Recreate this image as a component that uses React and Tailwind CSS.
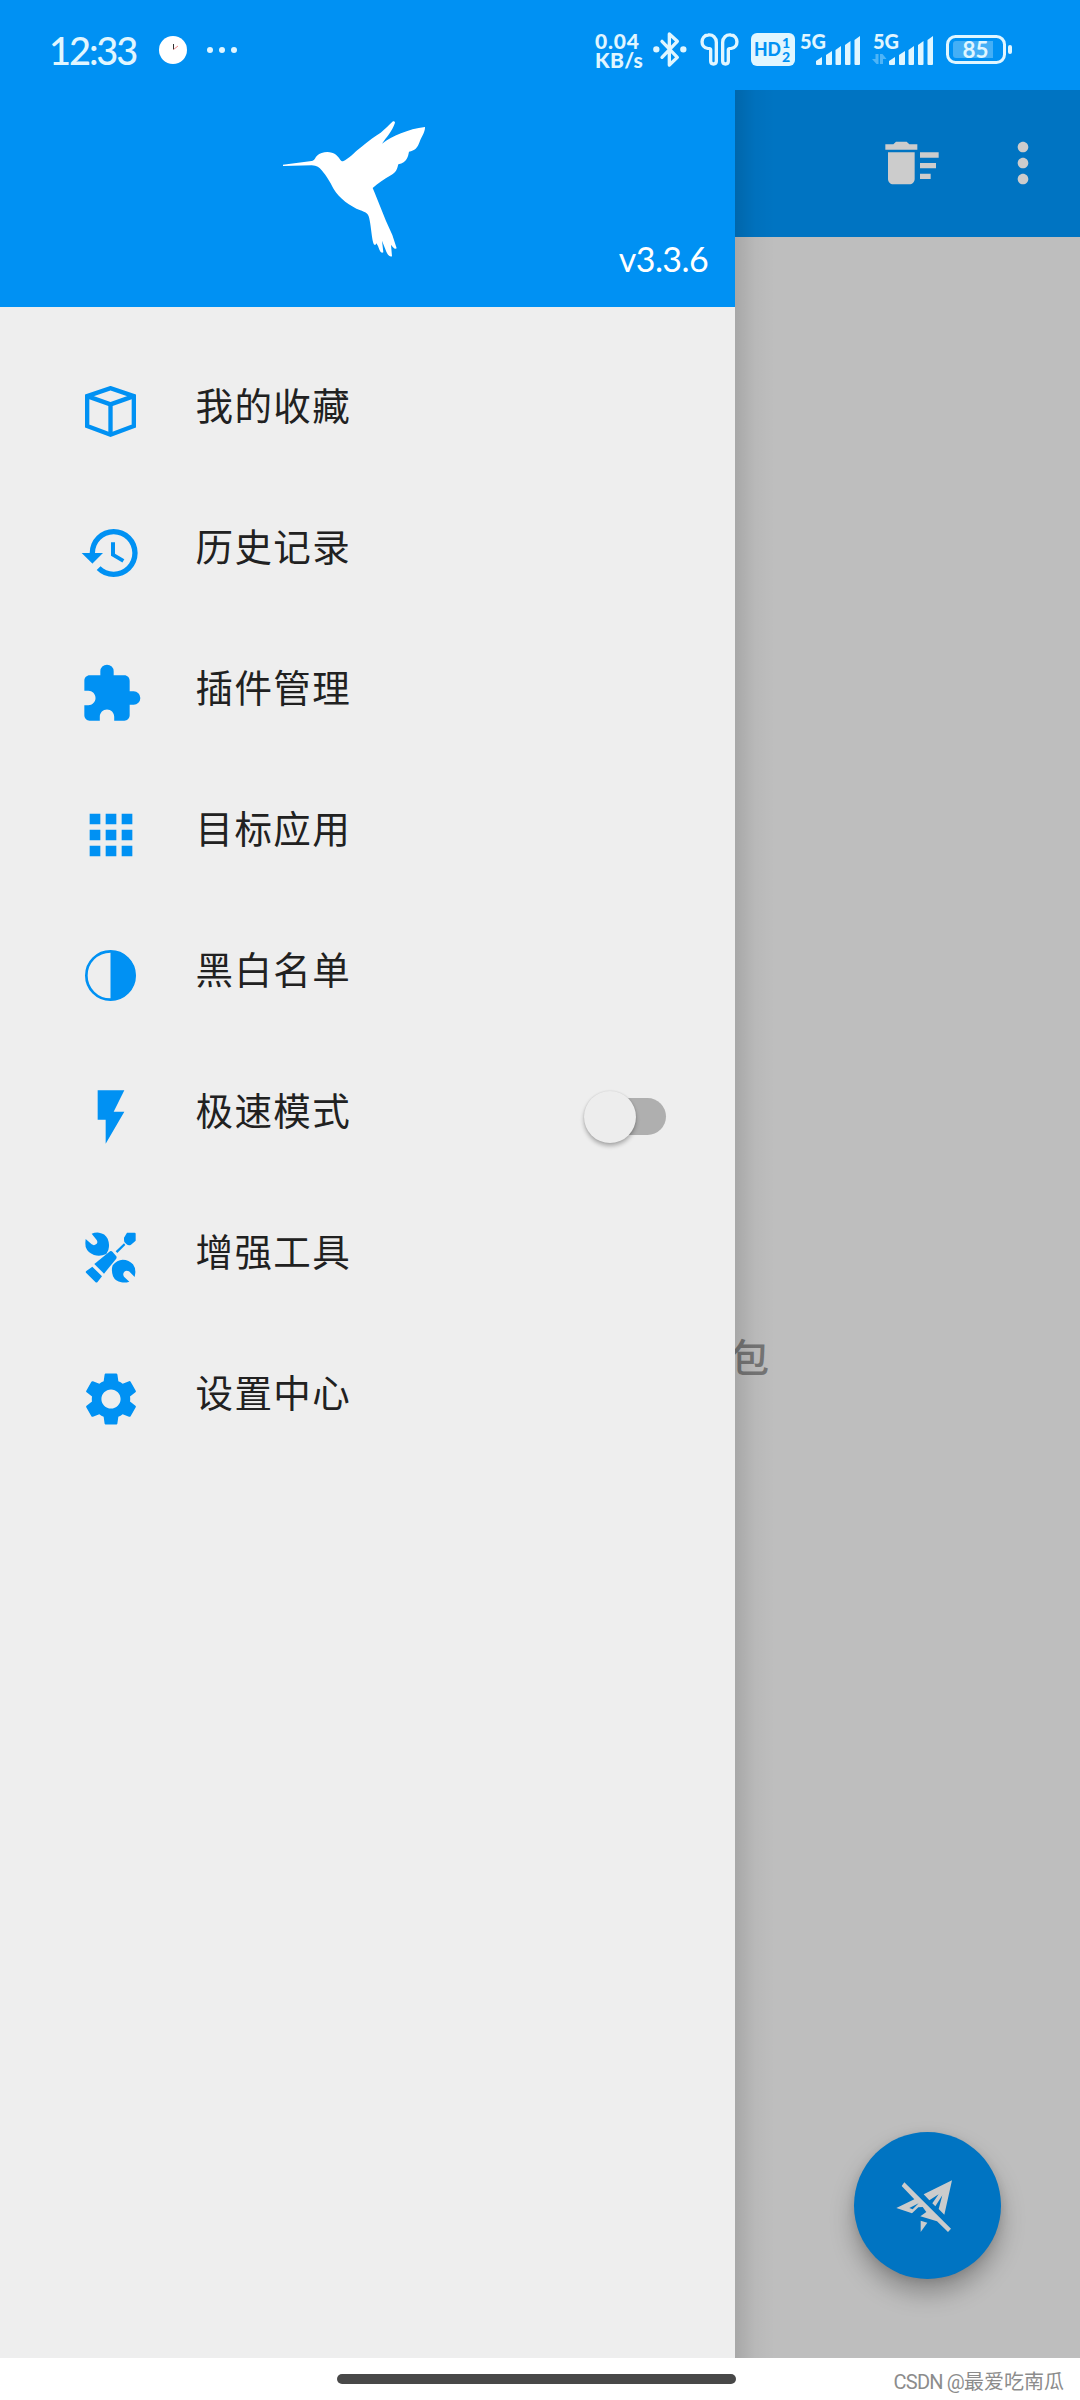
import React, { useState } from 'react';
import {
  MdHistory,
  MdExtension,
  MdApps,
  MdFlashOn,
  MdSettings,
  MdDeleteSweep,
  MdMoreVert,
} from 'react-icons/md';

const BoxIcon = () => (
  <svg className="w-[51px] h-[51px]" viewBox="0 0 153 153" fill="none" stroke="currentColor" strokeWidth="13">
    <path d="M6.500 30.500L76.500 6.500L146.500 30.500V120L76.500 146L6.500 120Z" />
    <path d="M6.500 30.500L76.500 55L146.500 30.500M76.500 55V146" />
  </svg>
);

const ContrastIcon = () => (
  <svg className="w-[51px] h-[51px]" viewBox="0 0 153 153">
    <circle cx="76.500" cy="76.500" r="72.500" fill="none" stroke="currentColor" strokeWidth="8" />
    <path d="M76.500 2a74.500 74.500 0 0 1 0 149z" fill="currentColor" />
  </svg>
);

const ToolsIcon = () => (
  <svg className="w-[51px] h-[51px]" viewBox="0 0 153 153" fill="currentColor">
    <path d="M20 5Q30 1 42 2Q60 4 68 20Q75 38 70 54L64 66Q45 75 27 69Q8 62 2 45Q0 33 2 21L20 37Q27 42 33 37Q40 32 35 24Z" />
    <path d="M133 149Q121 153 109 151Q91 148 84 133Q78 115 83 100Q96 84 113 83Q132 83 144 97Q152 108 151 122L149 135L132 118Q124 114 118 119Q112 126 117 134Z" />
    <path d="M126 2H149Q152 2 152 5V26L138 38Q131 42 124 36Q116 32 117 24V17Z" />
    <path d="M117 34L121 39L97 63L92 58Z" />
    <path d="M75 58Q79 56 83 60L94 73Q96 77 93 81L57 125L28 96Z" />
    <path d="M22 104L51 133L37 151Q34 153 31 150L3 122Q1 119 4 117Z" />
  </svg>
);

const HummingbirdLogo = () => (
  <svg className="w-[144px] h-[138px]" viewBox="66 60 432 414" fill="#fff">
    <path d="M69 194L155 183C164 181 165 173 171 167C185 154 212 152 228 164C239 173 240 183 249 184C266 177 282 158 303 142C326 122 346 108 362 98C376 88 387 74 399 64Q405 62 405 68C397 93 378 113 366 131C397 108 444 87 495 81C496 96 484 111 479 125C473 143 464 152 447 155C444 169 442 187 415 193C411 208 409 218 390 227C374 236 354 250 338 264L344 278L378 363L397 405L410 445C404 450 397 439 393 434L396 469C388 472 383 463 379 455L366 422L370 457C362 462 358 449 354 438L349 430L347 434C341 437 339 427 337 416C333 389 331 365 326 349C322 338 314 336 301 331C270 319 238 295 221 267C209 244 200 229 185 211C178 202 171 197 155 196L69 198Z" />
  </svg>
);

const BluetoothIcon = () => (
  <svg className="w-[34px] h-[37px]" viewBox="0 0 102 111" fill="none" stroke="currentColor" strokeWidth="10" strokeLinejoin="round" strokeLinecap="round">
    <path d="M27 31L73 79L49 102V9L73 31L27 79" />
    <circle cx="10" cy="55" r="4.500" fill="currentColor" />
    <circle cx="91" cy="55" r="4.500" fill="currentColor" />
  </svg>
);

const EarbudsIcon = () => (
  <svg className="w-[39px] h-[33px]" viewBox="0 0 117 99" fill="none" stroke="currentColor" strokeWidth="10">
    <path d="M24 6C39 4 49 14 49 28V84C49 96 32 96 32 84V50C32 46 28 46 23 46C0 44 1 8 24 6Z" />
    <path d="M93 6C78 4 68 14 68 28V84C68 96 85 96 85 84V50C85 46 89 46 94 46C117 44 116 8 93 6Z" />
  </svg>
);

const HdIcon = () => (
  <svg className="w-[44px] h-[33px]" viewBox="0 0 44 33">
    <rect width="44" height="33" rx="6" fill="currentColor" />
    <g fill="#0091f3" fontFamily="Lato, sans-serif" fontWeight="900">
      <text x="3" y="23" fontSize="19" textLength="27" lengthAdjust="spacingAndGlyphs">HD</text>
      <text x="31" y="15" fontSize="14">1</text>
      <text x="31" y="29" fontSize="14">2</text>
    </g>
  </svg>
);

const SignalIcon = ({ transferring }) => (
  <svg className="w-[62px] h-[34px] overflow-visible" viewBox="0 0 62 34" fill="currentColor">
    <text x="0" y="16" fontSize="20" fontFamily="Lato, sans-serif" fontWeight="900" textLength="26" lengthAdjust="spacingAndGlyphs">5G</text>
    <path d="M16 31V28L22 24V31Q22 32 21 32H17Q16 32 16 31Z" />
    <path d="M26 31V22L32 18V31Q32 32 31 32H27Q26 32 26 31Z" />
    <path d="M35.500 31V17L41 13V31Q41 32 40 32H36.500Q35.500 32 35.500 31Z" />
    <path d="M45 31V12L50.500 8V31Q50.500 32 49.500 32H46Q45 32 45 31Z" />
    <path d="M54.500 31V7L60 3V31Q60 32 59 32H55.500Q54.500 32 54.500 31Z" />
    {transferring && (
      <path d="M-1 26H2.500V21H5.500V31H3.500ZM7 21H9.500L13.500 26H10V31H7Z" opacity="0.35" />
    )}
  </svg>
);

const BatteryIcon = () => (
  <svg className="w-[67px] h-[30px]" viewBox="0 0 67 30">
    <rect x="1.500" y="1.500" width="57" height="26" rx="8" fill="none" stroke="currentColor" strokeWidth="3" />
    <path d="M10 6H47V23H10Q7 23 7 20V9Q7 6 10 6Z" fill="currentColor" opacity="0.3" />
    <rect x="62" y="10" width="4" height="9" rx="2" fill="currentColor" />
    <text x="16.500" y="22.500" fontSize="23" fontFamily="Lato, sans-serif" fontWeight="700" fill="currentColor" textLength="26" lengthAdjust="spacingAndGlyphs">85</text>
  </svg>
);

const SendOffIcon = () => (
  <svg className="w-[56px] h-[54px] mr-[7px]" viewBox="198 206 168 162" fill="#ccc">
    <path d="M366 210L343 313L326 296L337 255L316 288L307 279L326 252L298 270L281 252Z" />
    <path d="M223 216L363 355L354 365L321 333L271 318L289 305L278 290L265 291L246 309L199 293L253 267L215 227Z" />
    <path d="M272 331L292 337L272 365Z" />
    <path d="M266 279L238 293L248 297ZM275 289L261 300L273 291Z" fill="#0074c2" />
  </svg>
);

const menuItems = [
  { label: '我的收藏', icon: <BoxIcon /> },
  { label: '历史记录', icon: <MdHistory size={64} /> },
  { label: '插件管理', icon: <MdExtension size={64} /> },
  { label: '目标应用', icon: <MdApps size={64} /> },
  { label: '黑白名单', icon: <ContrastIcon /> },
  { label: '极速模式', icon: <MdFlashOn size={64} />, toggle: true },
  { label: '增强工具', icon: <ToolsIcon /> },
  { label: '设置中心', icon: <MdSettings size={64} /> },
];

const StatusBar = () => (
  <div className="h-[90px] bg-[#0091f3] text-[#e0f6ff] flex items-center pl-[49px] pr-[67px] pt-[9px]">
    <span className="w-[88px] font-['Lato'] text-[38px] leading-none font-medium tracking-[-2.100px] whitespace-nowrap">12:33</span>
    <svg className="w-7 h-7 ml-[22px]" viewBox="0 0 28 28">
      <circle cx="14" cy="14" r="14" fill="#fff" />
      <path d="M14.500 8V13.500" stroke="#333" />
      <path d="M14.500 13.500L19 10" stroke="#e88" />
    </svg>
    <div className="flex gap-1.5 ml-5">
      <span className="w-1.5 h-1.5 rounded-full bg-current" />
      <span className="w-1.5 h-1.5 rounded-full bg-current" />
      <span className="w-1.5 h-1.5 rounded-full bg-current" />
    </div>

    {/* System indicators */}
    <div className="ml-auto flex items-center">
      <div className="w-[58px] font-['Lato'] text-[21px] leading-[19px] font-black">
        <p className="tracking-[0.800px]">0.04</p>
        <p className="tracking-[0.300px]">KB/s</p>
      </div>
      <BluetoothIcon />
      <div className="ml-[13px]"><EarbudsIcon /></div>
      <div className="ml-[12px]"><HdIcon /></div>
      <div className="ml-[5px]"><SignalIcon /></div>
      <div className="ml-[11px]"><SignalIcon transferring /></div>
      <div className="ml-[11px]"><BatteryIcon /></div>
    </div>
  </div>
);

const Switch = ({ checked, onChange }) => (
  <button onClick={onChange} className="relative w-[82px] h-[52px] flex items-center">
    <span className="w-[74px] h-[37px] ml-2 rounded-full bg-[#afafaf]" />
    <span
      className={`absolute top-0 w-[52px] h-[52px] rounded-full bg-[#ededed] shadow-[0_3px_4px_rgba(0,0,0,0.28),0_0_2px_rgba(0,0,0,0.12)] ${checked ? 'right-0' : 'left-0'}`}
    />
  </button>
);

const MenuItem = ({ item, checked, onToggle }) => (
  <div className="h-[141px] pl-[78.500px] pr-[69px] flex items-center">
    <div className="w-16 h-16 flex items-center justify-center text-[#0091f3]">{item.icon}</div>
    <span className="flex-1 ml-[53px] pb-4 text-[37.500px] leading-[54px] tracking-[1.400px] text-[#212121]">
      {item.label}
    </span>
    {item.toggle && <Switch checked={checked} onChange={onToggle} />}
  </div>
);

const Drawer = () => {
  const [fastMode, setFastMode] = useState(false);

  return (
    <aside className="w-[735px] bg-[#eee] flex flex-col">
      <div className="h-[217px] bg-[#0091f3] flex justify-between pl-[282px] pr-[27px]">
        <div className="pt-[30px]">
          <HummingbirdLogo />
        </div>
        <span className="self-end mb-[27px] font-['Lato'] text-[34px] leading-[42px] tracking-[-0.600px] text-white">v3.3.6</span>
      </div>
      <nav className="pt-[34px]">
        {menuItems.map((item) => (
          <MenuItem
            key={item.label}
            item={item}
            checked={fastMode}
            onToggle={() => setFastMode(!fastMode)}
          />
        ))}
      </nav>
    </aside>
  );
};

const Content = () => (
  <main className="relative flex-1 overflow-hidden bg-[#bebebe] flex flex-col">
    <div className="h-[147px] bg-[#0074c2] text-[#ccc] flex items-center justify-end pr-[25.500px] pb-px">
      <MdDeleteSweep size={64} />
      <MdMoreVert size={64} className="ml-[47px]" />
    </div>
    <p className="mt-[1088px] -ml-[5px] text-[39px] leading-[60px] font-medium text-[#757575]">包</p>
    <button className="mt-auto mb-[79px] ml-[119px] w-[147px] h-[147px] rounded-full bg-[#0074c2] flex items-center justify-center shadow-[0_14px_24px_rgba(0,0,0,0.28),0_2px_8px_rgba(0,0,0,0.1)]">
      <SendOffIcon />
    </button>
    {/* Drawer edge shadow */}
    <div className="absolute inset-y-0 left-0 w-[40px] bg-gradient-to-r from-black/12 via-black/3 to-transparent" />
  </main>
);

const App = () => (
  <div className="w-[1080px] h-[2400px] overflow-hidden bg-white flex flex-col font-['Noto_Sans_CJK_SC',sans-serif]">
    <StatusBar />
    <div className="h-[2268px] flex">
      <Drawer />
      <Content />
    </div>
    <div className="h-[42px] flex items-start justify-between pl-[337px] pr-4">
      <div className="w-[399px] h-[10px] mt-4 rounded-full bg-[#484848]" />
      <span className="mt-2.5 font-['Liberation_Sans_Narrow','Roboto','Noto_Sans_CJK_SC',sans-serif] text-[20px] leading-[28px] text-[#8c8c8c] whitespace-nowrap">
        <span className="tracking-[-0.800px]">CSDN @</span>
        <span>最爱吃南瓜</span>
      </span>
    </div>
  </div>
);

export default App;
